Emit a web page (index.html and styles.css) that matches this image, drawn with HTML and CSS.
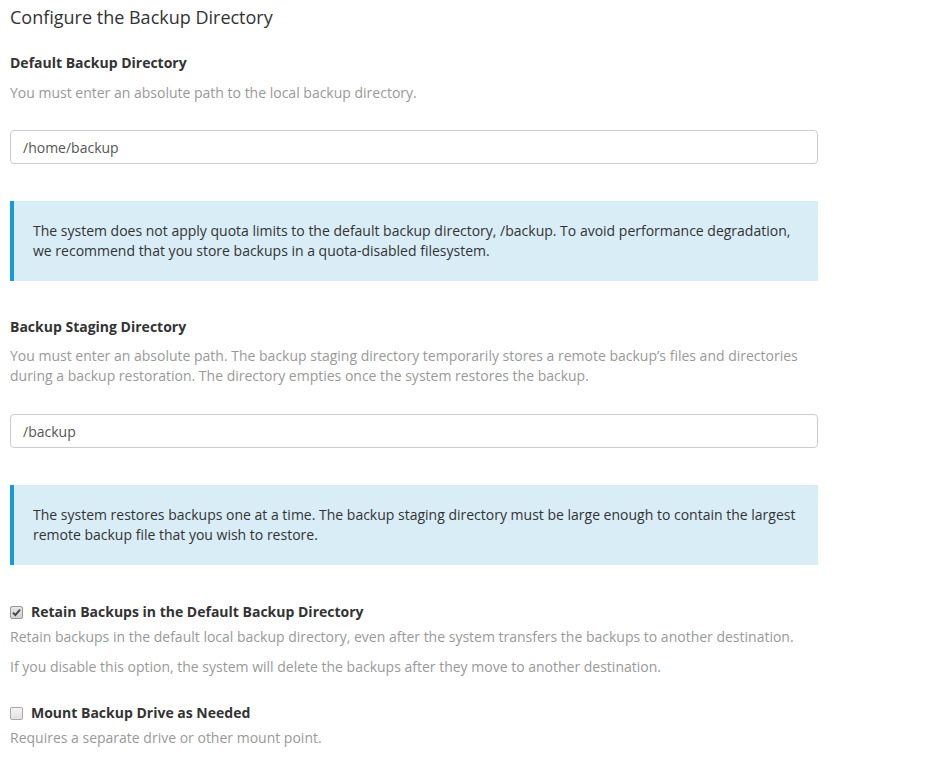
FILE: index.html
```html
<!DOCTYPE html>
<html lang="en">
<head>
<meta charset="utf-8">
<title>Configure the Backup Directory</title>
<link rel="stylesheet" href="styles.css">
</head>
<body>
<main class="page">
  <h2 class="title">Configure the Backup Directory</h2>

  <section class="field first">
    <label class="label" for="def">Default Backup Directory</label>
    <p class="help">You must enter an absolute path to the local backup directory.</p>
    <input class="input" id="def" type="text" value="/home/backup">
    <div class="alert">The system does not apply quota limits to the default backup directory, /backup. To avoid performance degradation, we recommend that you store backups in a quota-disabled filesystem.</div>
  </section>

  <section class="field">
    <label class="label" for="stg">Backup Staging Directory</label>
    <p class="help">You must enter an absolute path. The backup staging directory temporarily stores a remote backup’s files and directories during a backup restoration. The directory empties once the system restores the backup.</p>
    <input class="input" id="stg" type="text" value="/backup">
    <div class="alert">The system restores backups one at a time. The backup staging directory must be large enough to contain the largest remote backup file that you wish to restore.</div>
  </section>

  <section class="option first-option">
    <div class="check-row">
      <span class="box checked">
        <svg width="9" height="9" viewBox="0 0 9 9"><path d="M1 4.6 L3.4 7 L8 1.6" fill="none" stroke="#444" stroke-width="1.9"/></svg>
      </span>
      <span class="label">Retain Backups in the Default Backup Directory</span>
    </div>
    <p class="opt-help">Retain backups in the default local backup directory, even after the system transfers the backups to another destination.</p>
    <p class="opt-help second">If you disable this option, the system will delete the backups after they move to another destination.</p>
  </section>

  <section class="option">
    <div class="check-row">
      <span class="box"></span>
      <span class="label">Mount Backup Drive as Needed</span>
    </div>
    <p class="opt-help">Requires a separate drive or other mount point.</p>
  </section>
</main>
</body>
</html>
```

FILE: styles.css
```css
* { box-sizing: border-box; }
html, body { margin: 0; padding: 0; background: #fff; }
body {
  font-family: "Open Sans", "DejaVu Sans", sans-serif;
  font-size: 14px;
  line-height: 20px;
  color: #333;
}
.page {
  width: 818px;
  padding: 7px 0 0 10px;
}
.title {
  margin: 0;
  font-size: 18px;
  line-height: 20px;
  font-weight: 400;
  color: #333;
}
.field { display: flex; flex-direction: column; margin-top: 36px; }
.field.first { margin-top: 26px; }
.label {
  display: block;
  font-weight: 700;
  color: #333;
  line-height: 20px;
}
.help {
  margin: 10px 0 0;
  color: #999;
}
.field + .field .help { margin-top: 9px; }
.input {
  margin-top: 27px;
  height: 34px;
  width: 100%;
  padding: 6px 12px;
  border: 1px solid #ccc;
  border-radius: 4px;
  font-family: inherit;
  font-size: 14px;
  color: #555;
  background: #fff;
  outline: none;
}
.field + .field .input { margin-top: 28px; }
.alert {
  margin-top: 37px;
  padding: 20px 20px 20px 19px;
  background: #d9edf7;
  border-left: 4px solid #179bd7;
  color: #333;
  line-height: 20px;
}
.option { margin-top: 26px; }
.option.first-option { margin-top: 37px; }
.check-row { display: flex; align-items: center; gap: 8px; }
.box {
  width: 13px;
  height: 13px;
  margin-left: 0;
  border: 1px solid #a9a9a9;
  border-radius: 2px;
  background: linear-gradient(#f4f4f4, #e2e2e2);
  display: flex;
  align-items: center;
  justify-content: center;
}
.box.checked { background: linear-gradient(#e6e6e6, #d2d2d2); border-color: #999; }
.box svg { display: block; }
.opt-help { margin: 5px 0 0; color: #999; }
.opt-help.second { margin-top: 10px; }
.option + .option .opt-help { margin-top: 5px; }
```
